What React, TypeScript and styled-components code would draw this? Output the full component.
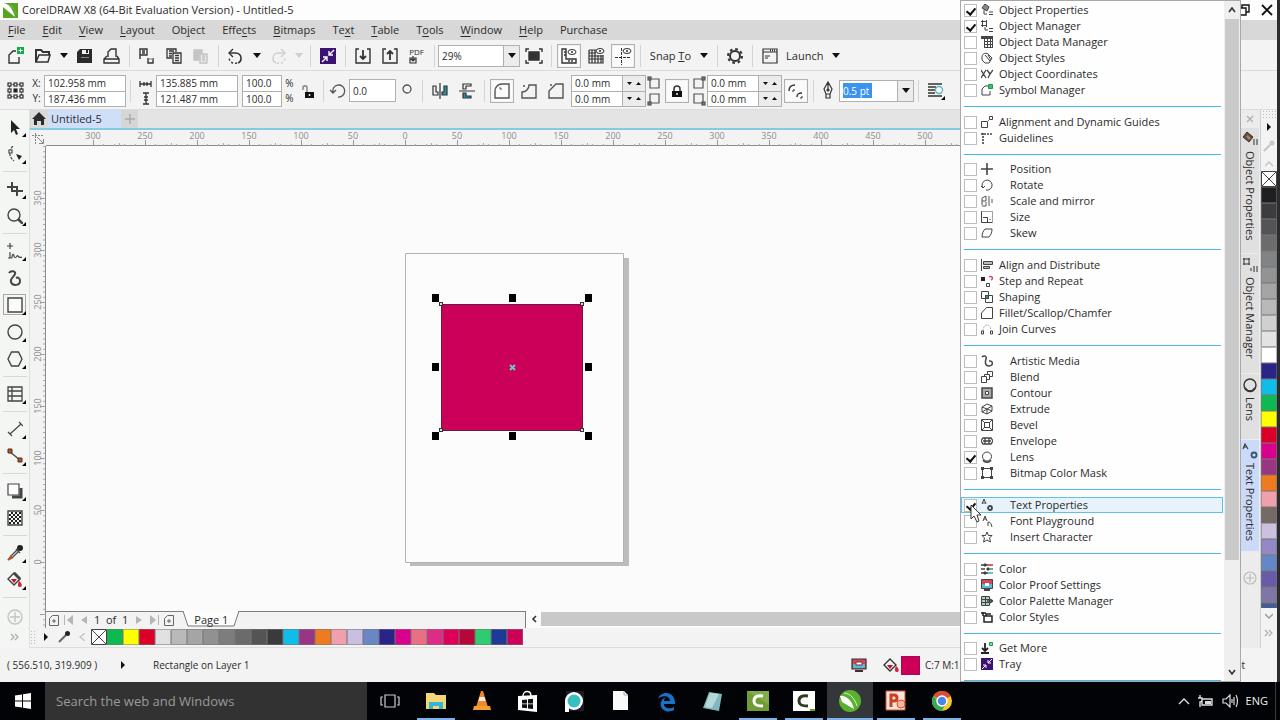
import React from "react";
import styled, { createGlobalStyle, css } from "styled-components";

const GlobalStyle = createGlobalStyle`
  * { box-sizing: border-box; }
  body { margin: 0; background: #000; }
  button, input, select { font: inherit; color: inherit; }
`;

const ink = "#2b2b2b";

/* ---------- icons ---------- */

type IconProps = { w: number; h: number; stroke?: string; sw?: number; children: React.ReactNode };

const Glyph = styled.svg`
  display: block;
  flex: none;
  fill: none;
`;

function Icon({ w, h, stroke = "#333", sw = 1.4, children }: IconProps) {
  return (
    <Glyph width={w} height={h} viewBox={`0 0 ${w} ${h}`} stroke={stroke} strokeWidth={sw} aria-hidden="true">
      {children}
    </Glyph>
  );
}

const Arrow = ({ color = "#111" }: { color?: string }) => (
  <Icon w={8} h={5} stroke="none">
    <path d="M0 0h8L4 5z" fill={color} />
  </Icon>
);

const CorelLogo = () => (
  <Icon w={16} h={16} stroke="none">
    <path d="M0 1h15v15H0z" fill="#57a51f" />
    <path d="M0 1c5 0 10 6 12 14L0 5z" fill="#fff" />
    <path d="M4 2c4 1 8 5 10 11C12 8 9 4 4 2z" fill="#e5f3d8" />
  </Icon>
);

const toolbarIcons: Record<string, React.ReactNode> = {
  new: (
    <Icon w={18} h={18}>
      <path d="M9 4H6L2 8v8h10v-6" />
      <path d="M10 0h7v7h-7z" fill="#17a849" stroke="none" />
      <path d="M13.500 1.500v4M11.500 3.500h4" stroke="#fff" strokeWidth="1" />
    </Icon>
  ),
  open: (
    <Icon w={18} h={18}>
      <path d="M2 15V3h5l2 2h6v3" strokeWidth="2" />
      <path d="M2 15L5 8h11l-2 7z" strokeWidth="1.500" />
    </Icon>
  ),
  save: (
    <Icon w={18} h={18} stroke="none">
      <path d="M1 5l3-3h12v14H1z" fill="#2b2b2b" />
      <path d="M6 3h7v4H6z" fill="#f3f3f3" />
      <path d="M10 3h2v3h-2z" fill="#2b2b2b" />
      <path d="M5 10h8v1H5z" fill="#888" />
    </Icon>
  ),
  print: (
    <Icon w={18} h={18}>
      <path d="M5 10V5l3-3h5v8" />
      <path d="M4 9L1 12v4h15v-4L14 9M1 12h15" />
    </Icon>
  ),
  cut: (
    <Icon w={18} h={18}>
      <path d="M2 12V2h7v6H2M4 4h3M4 6h3" />
      <path d="M10 11v5h5v-5" />
      <path d="M11 12h4" stroke="#999" />
    </Icon>
  ),
  copy: (
    <Icon w={18} h={18} sw={1.3}>
      <path d="M7 11H2V2h9v3M4 4h5M4 6.500h3M4 9h3" />
      <path d="M8 6h8v10H8zM10 8.500h4M10 11h4M10 13.500h4" />
    </Icon>
  ),
  paste: (
    <Icon w={18} h={18} stroke="#c4c4c4">
      <path d="M2 3h8v3H7v7H2z" fill="#c4c4c4" />
      <path d="M8 7h7v9H8zM10 9h3M10 11h3M10 13h3" fill="#e8e8e8" />
    </Icon>
  ),
  undo: (
    <Icon w={18} h={18}>
      <path d="M3 6h6a5 5 0 0 1 5 5 5 5 0 0 1-3 5" strokeWidth="1.600" />
      <path d="M10 16a6 6 0 0 1-8-5" strokeDasharray="2 2" />
      <path d="M6 2L2 6l4 4" />
    </Icon>
  ),
  redo: (
    <Icon w={18} h={18} stroke="#cfcfcf">
      <path d="M15 6H9a5 5 0 0 0-5 5 5 5 0 0 0 3 5" />
      <path d="M8 16a6 6 0 0 0 8-5" strokeDasharray="2 2" />
      <path d="M12 2l4 4-4 4" />
    </Icon>
  ),
  connect: (
    <Icon w={16} h={16} stroke="#fff">
      <path d="M0 0h16v16H0z" fill="#3c1272" stroke="none" />
      <path d="M14 2L9 7M9 3v4h4M2 14l5-5M3 9h4v4" />
    </Icon>
  ),
  import: (
    <Icon w={18} h={18}>
      <path d="M5 2H2v14h14V2h-3" />
      <path d="M9 3v9M6 9l3 3 3-3" strokeWidth="1.800" />
    </Icon>
  ),
  export: (
    <Icon w={18} h={18}>
      <path d="M5 2H2v14h14V2h-3" />
      <path d="M9 13V4M6 7l3-3 3 3" strokeWidth="1.800" />
    </Icon>
  ),
  full: (
    <Icon w={18} h={18}>
      <path d="M4 5h10v8H4z" fill="#333" />
      <path d="M1 5V2h3M14 2h3v3M17 13v3h-3M4 16H1v-3" />
    </Icon>
  ),
  rulers: (
    <Icon w={18} h={18}>
      <path d="M2 2h4v10h10v4H2zM4 5h2M4 8h2M9 13v2M12 13v2" />
      <ellipse cx="12" cy="5" rx="4" ry="2.500" strokeWidth="1" />
      <circle cx="12" cy="5" r="1" fill="#333" stroke="none" />
    </Icon>
  ),
  grid: (
    <Icon w={18} h={18} sw={1.2}>
      <path d="M2 3v13h14V8M5 3v13M8 3v13M11 8v8M14 8v8M2 3h7M2 6h7M2 9h14M2 12h14" />
      <ellipse cx="13" cy="4" rx="4" ry="2.500" strokeWidth="1" />
      <circle cx="13" cy="4" r="1" fill="#333" stroke="none" />
    </Icon>
  ),
  guides: (
    <Icon w={18} h={18} sw={1}>
      <path d="M7.500 1v17M1 10.500h16" strokeDasharray="3 1" />
      <ellipse cx="13" cy="4" rx="4" ry="2.500" />
      <circle cx="13" cy="4" r="1" fill="#333" stroke="none" />
    </Icon>
  ),
  gear: (
    <Icon w={18} h={18}>
      <circle cx="9" cy="9" r="5" strokeWidth="2" />
      <circle cx="9" cy="9" r="7" strokeWidth="2" strokeDasharray="2.700 2.800" />
    </Icon>
  ),
  launch: (
    <Icon w={18} h={18} sw={1.2}>
      <path d="M2 2h14v14H2zM2 5h14M4 9h5M4 11h3" />
      <path d="M9 3.500h6" strokeWidth="2" strokeDasharray="1 1" />
    </Icon>
  ),
};

const PdfIcon = styled.span`
  display: flex;
  flex-direction: column;
  align-items: flex-start;
  font-size: 8px;
  line-height: 9px;
`;

/* ---------- window frame ---------- */

const Desktop = styled.div`
  display: flex;
  flex-direction: column;
  height: 100vh;
  font-family: "Open Sans", "Noto Sans", sans-serif;
  font-size: 11px;
  line-height: 16px;
  color: ${ink};
`;

const AppWindow = styled.main`
  position: relative;
  flex: 1;
  display: flex;
  flex-direction: column;
  min-height: 0;
  background: #f3f3f3;
  border-right: 3px solid #2c2c2f;
  overflow: hidden;
`;

const TitleBar = styled.header`
  display: flex;
  flex: none;
  align-items: center;
  height: 20px;
  padding-left: 3px;
  gap: 3px;
  background: #fdfdfd;
`;

const Title = styled.h1`
  flex: 1;
  margin: 0;
  font: inherit;
`;

const PlainButton = styled.button`
  display: flex;
  align-items: center;
  justify-content: center;
  padding: 0;
  border: 0;
  background: none;
`;

const WindowButton = styled(PlainButton)`
  width: 20px;
  height: 18px;
`;

const MenuBar = styled.nav`
  display: flex;
  flex: none;
  height: 20px;
  background: #d8d8d8;
`;

const MenuButton = styled(PlainButton)`
  padding: 0 9px 0 8px;
  u { text-underline-offset: 2px; }
`;

const Toolbar = styled.div`
  display: flex;
  flex: none;
  align-items: center;
  height: 30px;
  padding: 1px 0 0 2px;
`;

const PropertyBar = styled(Toolbar)`
  height: 40px;
  border-top: 1px solid #dcdcdc;
  border-bottom: 1px solid #dcdcdc;
  font-size: 10px;
`;

const Divider = styled.span`
  flex: none;
  width: 8px;
  height: 22px;
  background: linear-gradient(#d4d4d4, #d4d4d4) center / 1px 100% no-repeat;
`;

const ToolButton = styled(PlainButton)<{ $framed?: boolean; $narrow?: boolean }>`
  flex: none;
  width: ${(p) => (p.$narrow ? 22 : 27)}px;
  height: 27px;
  svg { overflow: visible; }
  ${(p) =>
    p.$framed &&
    css`
      background: linear-gradient(#fbfbfb, #fbfbfb) center / 20px 20px no-repeat;
      &::before {
        content: "";
        position: absolute;
        width: 22px;
        height: 22px;
        border: 1px solid #b0b0b0;
      }
    `}
`;

const DropButton = styled(PlainButton)<{ $wide?: boolean }>`
  flex: none;
  width: ${(p) => (p.$wide ? 18 : 15)}px;
  height: 22px;
`;

const TextButton = styled(PlainButton)`
  padding: 0 4px 0 3px;
`;

const Combo = styled.div<{ $w: number }>`
  display: flex;
  align-items: center;
  flex: none;
  width: ${(p) => p.$w}px;
  height: 22px;
  border: 1px solid #b0b0b0;
  background: #fff;
  font-size: 10px;
`;

const ComboSelect = styled.select`
  flex: 1;
  min-width: 0;
  height: 20px;
  padding: 0 3px;
  border: 0;
  background: none;
  appearance: none;
`;

const ComboArrow = styled.span`
  display: flex;
  align-items: center;
  justify-content: center;
  width: 16px;
  height: 20px;
  border-left: 1px solid #b0b0b0;
  background: #ececec;
`;

const ComboBody = styled.span`
  flex: 1;
  padding-left: 3px;
`;

const SelectedInput = styled.input`
  display: block;
  width: 29px;
  height: 15px;
  padding: 0;
  border: 0;
  background: #3a93ee;
  color: #fff;
`;

const FieldPair = styled.div<{ $w: number }>`
  flex: none;
  width: ${(p) => p.$w}px;
  border: 1px solid #b0b0b0;
  background: #fff;
`;

const FieldRow = styled.div`
  display: flex;
  height: 15px;
  & + & { border-top: 1px solid #b0b0b0; }
`;

const Field = styled.input`
  flex: 1;
  min-width: 0;
  width: 100%;
  padding: 0 3px;
  border: 0;
  background: none;
  line-height: 14px;
`;

const Spinner = styled.span`
  display: flex;
  align-items: center;
  justify-content: space-evenly;
  width: 23px;
  border-left: 1px solid #b0b0b0;
  background: #ececec;
`;

const SideLabels = styled.div<{ $w: number }>`
  display: flex;
  flex: none;
  flex-direction: column;
  align-items: center;
  width: ${(p) => p.$w}px;
  line-height: 15px;
  label, span, svg { height: 15px; }
`;

const AngleField = styled(Field)`
  flex: none;
  width: 47px;
  height: 23px;
  border: 1px solid #b0b0b0;
  background: #fff;
`;

/* ---------- workspace ---------- */

const Workspace = styled.div`
  flex: 1;
  display: flex;
  min-height: 0;
`;

const Toolbox = styled.aside`
  display: flex;
  flex: none;
  flex-direction: column;
  align-items: center;
  width: 30px;
  padding-top: 3px;
  border-right: 1px solid #dedede;
  background: #f4f6f4;
`;

const ToolSlot = styled(PlainButton)<{ $active?: boolean }>`
  position: relative;
  flex: none;
  width: 27px;
  height: 27px;
  ${(p) =>
    p.$active &&
    css`
      &::before {
        content: "";
        position: absolute;
        inset: 3px 2px;
        border: 1px solid #a8a8a8;
      }
    `}
`;

const Flyout = styled.span`
  position: absolute;
  right: 2px;
  bottom: 3px;
  border: 2px solid #000;
  border-top-color: transparent;
  border-left-color: transparent;
`;

const ToolRule = styled.span`
  flex: none;
  width: 24px;
  height: 8px;
  background: linear-gradient(#d8d8d8, #d8d8d8) center / 100% 1px no-repeat;
`;

const Center = styled.section`
  flex: 1;
  display: flex;
  flex-direction: column;
  min-width: 0;
`;

const TabStrip = styled.div`
  display: flex;
  flex: none;
  height: 20px;
  background: #e4e4e4;
  border-bottom: 2px solid #86c9e3;
`;

const HomeTab = styled(PlainButton)`
  width: 18px;
  background: #dadada;
`;

const DocTab = styled(PlainButton)`
  justify-content: flex-start;
  width: 73px;
  padding-left: 3px;
  background: #cfdffa;
`;

const AddTab = styled(PlainButton)`
  width: 17px;
  background: #d6d6d6;
`;

const DrawArea = styled.div`
  flex: 1;
  display: grid;
  grid-template: 16px minmax(0, 1fr) 17px / 16px minmax(0, 1fr);
  min-height: 0;
`;

const RulerCorner = styled.div`
  background: #f3f3f3;
  padding: 2px;
`;

const RulerX = styled.svg`
  width: 100%;
  height: 16px;
  background: #f3f3f3;
  font-size: 9px;
`;

const RulerY = styled.div`
  grid-row: 2 / 4;
  min-height: 0;
  overflow: hidden;
  font-size: 9px;
`;

const Canvas = styled.div`
  min-width: 0;
  min-height: 0;
  overflow: hidden;
  background: #fbfbfb;
`;

const PageNav = styled.div`
  display: flex;
  min-width: 0;
`;

const PageControls = styled.div`
  display: flex;
  align-items: center;
  flex: none;
  width: 480px;
  border-top: 1px solid #7e7e7e;
  border-right: 1px solid #7e7e7e;
`;

const NavButton = styled(PlainButton)`
  width: 15px;
  height: 16px;
`;

const PageCount = styled.span`
  padding: 0 3px;
`;

const PageTab = styled(PlainButton)`
  position: relative;
  width: 56px;
  height: 16px;
  margin-left: 7px;
  svg { position: absolute; left: 0; top: -1px; }
  span { position: relative; }
`;

const HScroll = styled.div`
  flex: 1;
  display: flex;
  background: #fbfbfb;
`;

const ScrollThumb = styled.span`
  flex: 1;
  margin: 1px 17px 2px 0;
  background: #c9c9c9;
`;

const DocPalette = styled.div`
  display: flex;
  flex: none;
  align-items: center;
  height: 20px;
  padding-bottom: 1px;
  border-bottom: 1px solid #dcdcdc;
`;

const PaletteButton = styled(PlainButton)`
  width: 18px;
  height: 16px;
`;

const Grip = styled.span`
  width: 7px;
  height: 14px;
  background: radial-gradient(#bbb 1px, transparent 1px) 0 0 / 3px 3px;
`;

const BarGrip = styled(Grip)`
  flex: none;
  width: 14px;
  height: 8px;
`;

const Swatches = styled.div<{ $vertical?: boolean }>`
  display: flex;
  flex: none;
  flex-direction: ${(p) => (p.$vertical ? "column" : "row")};
`;

const Swatch = styled.button<{ $c: string }>`
  display: block;
  flex: none;
  width: 16px;
  height: 16px;
  padding: 0;
  border: 1px solid #77777788;
  background: ${(p) => p.$c};
`;

/* ---------- dockers ---------- */

const Dockers = styled.aside`
  display: flex;
  flex: none;
  flex-direction: column;
  align-items: center;
  width: 21px;
  border-right: 1px solid #d0d0d0;
  background: #ececec;
`;

const DockTab = styled(PlainButton)<{ $h: number; $active?: boolean }>`
  flex: none;
  flex-direction: column;
  justify-content: flex-start;
  gap: 4px;
  width: 18px;
  height: ${(p) => p.$h}px;
  padding-top: 3px;
  background: ${(p) => (p.$active ? "#cbdaf8" : "#e0e0e0")};
  border-bottom: 1px solid #ececec;
  span { writing-mode: vertical-rl; }
`;

const DockButton = styled(PlainButton)<{ $h: number }>`
  flex: none;
  width: 100%;
  height: ${(p) => p.$h}px;
`;

const ColorBar = styled.aside`
  display: flex;
  flex: none;
  flex-direction: column;
  align-items: center;
  width: 16px;
`;

const CutSwatches = styled(Swatches)`
  overflow: hidden;
  height: 437px;
`;

/* ---------- status bar ---------- */

const StatusBar = styled.footer`
  display: flex;
  flex: none;
  align-items: center;
  height: 34px;
  padding-left: 7px;
  font-size: 10px;
  white-space: nowrap;
`;

const StatusCoords = styled.span`
  width: 114px;
`;

const StatusCell = styled.span`
  width: 32px;
`;

const StatusObject = styled.span`
  flex: 1;
`;

const StatusFill = styled.span`
  width: 35px;
  margin-right: 257px;
  overflow: hidden;
`;

const StatusOutline = styled.span`
  width: 60px;
  text-align: right;
  padding-right: 32px;
`;

const StatusSwatch = styled.span`
  width: 19px;
  height: 19px;
  margin-right: 5px;
  background: #cc0058;
  border: 1px solid #a50a4c;
`;

/* ---------- dockers pop-up menu ---------- */

const Popup = styled.div`
  position: absolute;
  top: 0;
  bottom: 0;
  right: 36px;
  display: flex;
  width: 281px;
  border: 1px solid #a8a8a8;
  background: #fefefe;
  overflow: hidden;
`;

const PopupList = styled.form`
  flex: 1;
  padding-top: 1px;
`;

const PopupGroup = styled.fieldset<{ $tight?: boolean }>`
  margin: 0 0 ${(p) => (p.$tight ? 6 : 7)}px;
  padding: 0;
  border: 0;
  &::after {
    content: "";
    display: block;
    height: 1px;
    margin: 8px 3px 0;
    background: #45b9e0;
  }
`;

const PopupItem = styled.label<{ $hot?: boolean; $inset?: boolean }>`
  display: flex;
  align-items: center;
  height: 16px;
  padding-left: ${(p) => (p.$hot ? 2 : 3)}px;
  ${(p) =>
    p.$hot &&
    css`
      margin-right: 1px;
      border: 1px solid #62c0e2;
      background: #e6f3fb;
    `}
  span { padding-left: ${(p) => (p.$inset ? 17 : 6)}px; }
`;

const CheckBox = styled.input`
  flex: none;
  width: 13px;
  height: 13px;
  margin: 0 4px 0 0;
  border: 1px solid #bdbdbd;
  background: #fff;
  appearance: none;
  &:checked::after {
    content: "";
    display: block;
    width: 4px;
    height: 7px;
    margin: 1px 0 0 3px;
    border: solid #111;
    border-width: 0 2px 2px 0;
    transform: rotate(40deg);
  }
`;

const PopupScroll = styled.div`
  display: flex;
  flex-direction: column;
  justify-content: space-between;
  width: 16px;
  padding: 0 1px;
  background: #efefef;
`;

const ScrollTrack = styled.span`
  flex: 1;
  &::before {
    content: "";
    display: block;
    height: 84%;
    background: #cacaca;
  }
`;

const ScrollArrow = styled.span`
  display: flex;
  align-items: center;
  justify-content: center;
  height: 18px;
`;

const Cursor = styled.div`
  position: absolute;
  top: 504px;
  right: 294px;
`;

/* ---------- taskbar ---------- */

const Taskbar = styled.footer`
  display: flex;
  flex: none;
  height: 38px;
  background: #020306;
  color: #eee;
`;

const StartButton = styled(PlainButton)`
  width: 45px;
`;

const Search = styled.input`
  width: 322px;
  padding: 0 11px;
  border: 0;
  background: #323232;
  font-size: 13px;
  &::placeholder { color: #9a9a9a; opacity: 1; }
`;

const TaskItem = styled(PlainButton)<{ $open?: boolean; $active?: boolean }>`
  width: 46px;
  background: ${(p) => (p.$active ? "#34373a" : "none")};
  ${(p) =>
    p.$open &&
    css`
      background-image: linear-gradient(#7fb2e6, #7fb2e6);
      background-size: ${p.$active ? "100%" : "38px"} 2px;
      background-position: center bottom;
      background-repeat: no-repeat;
    `}
`;

const Tray = styled.div`
  display: flex;
  align-items: center;
  gap: 8px;
  margin-left: auto;
  padding-right: 7px;
  border-right: 1px solid #3a3a3a;
  margin-right: 4px;
`;

/* ---------- data ---------- */

const menus: [string, number][] = [
  ["File", 0], ["Edit", 0], ["View", 0], ["Layout", 0], ["Object", 2], ["Effects", 4], ["Bitmaps", 0],
  ["Text", 2], ["Table", 0], ["Tools", 1], ["Window", 0], ["Help", 0], ["Purchase", -1],
];

const docColors = [
  "#0dba52", "#ffff00", "#dc0028", "#e1e1e1", "#b9b9b9", "#a5a5a5", "#919191", "#7d7d7d", "#6b6b6b", "#545454",
  "#3a3a3e", "#10bde8", "#993683", "#ef7b20", "#f0a0ac", "#c9bfe0", "#6987c5", "#2a2489", "#d9008c", "#e87084",
  "#de2b86", "#dd0057", "#b50838", "#2ecc71", "#1e3a96", "#cc0058",
];

const barColors = [
  "#1f1f22", "#3c3c3f", "#545456", "#6b6c6b", "#818385", "#939393", "#a5a5a5", "#b9b9b9", "#d0d0d0", "#e3e3e3",
  "#ffffff", "#2a2489", "#10bde8", "#0dba52", "#ffff00", "#dc0028", "#d9008c", "#993683", "#ef7b20", "#f0a0ac",
  "#756a66", "#cbc0e0", "#9489c4", "#6687c6", "#6b5aa8", "#8076a6", "#425b93",
];

const tools: ({ name: string; flyout?: boolean; active?: boolean; art: React.ReactNode } | null)[] = [
  { name: "Pick", flyout: true, art: <path d="M4 1v13l3-3 2 5 2-1-2-5h4z" fill="#222" stroke="none" /> },
  {
    name: "Shape", flyout: true,
    art: (<><path d="M6 0C2 4 1 10 7 15" strokeDasharray="3 1" strokeWidth="1.200" /><path d="M2 4h3v3H2z" fill="#fff" strokeWidth="1.200" /><path d="M9 8l6 2-3 4z" fill="#222" stroke="none" /></>),
  },
  null,
  { name: "Crop", flyout: true, art: <path d="M0 6h10v9M5 1v9h11" strokeWidth="2" /> },
  { name: "Zoom", flyout: true, art: (<><circle cx="7" cy="7" r="6" /><path d="M11 11l5 5" strokeWidth="2.500" /></>) },
  null,
  { name: "Freehand", flyout: true, art: <path d="M3 0v6M0 3h6M3 9v6M1 15h4M5 15c0-5 2-4 2-2s2 2 3 0 1 3 5 1" strokeWidth="1.200" /> },
  { name: "Artistic Media", art: <path d="M2 3c2-3 7-2 6 1S3 8 4 12s9 4 9-1c0-3-2-4-4-3" strokeWidth="2" /> },
  { name: "Rectangle", flyout: true, active: true, art: <path d="M1 1h14v14H1z" fill="#fbfbf8" /> },
  { name: "Ellipse", flyout: true, art: <circle cx="8" cy="8" r="7" /> },
  { name: "Polygon", flyout: true, art: <path d="M4.500 1h7L15 8l-3.500 7h-7L1 8z" /> },
  null,
  { name: "Table", flyout: true, art: <path d="M1 1h14v14H1zM5 1v14M1 5h14M1 10h14M5 5v10" strokeWidth="1.300" /> },
  null,
  { name: "Dimension", flyout: true, art: <path d="M3 13L14 3M1 11l4 4M12 1l4 4" strokeWidth="1.200" /> },
  {
    name: "Connector", flyout: true,
    art: (<><path d="M3 4l10 8" /><path d="M1 1h4v4H1zM11 10h4v4h-4z" fill="#a5562c" stroke="#5a331d" strokeWidth="1" /></>),
  },
  null,
  { name: "Drop Shadow", flyout: true, art: (<><path d="M5 14h9V5" strokeWidth="3" /><path d="M1 1h11v11H1z" fill="#fff" strokeWidth="1.200" /></>) },
  {
    name: "Transparency",
    art: (
      <>
        <path d="M1 1h14v14H1z" />
        {Array.from({ length: 36 }, (_, i) =>
          (i + Math.floor(i / 6)) % 2 ? (
            <rect key={i} x={2 + (i % 6) * 2} y={2 + Math.floor(i / 6) * 2} width="2" height="2" fill="#222" stroke="none" />
          ) : null
        )}
      </>
    ),
  },
  null,
  {
    name: "Color Eyedropper", flyout: true,
    art: (<><path d="M10 5L4 11l-2 3 3-1 6-6" strokeWidth="1.200" /><path d="M1 15l3-4 1 2z" fill="#b5542c" stroke="#b5542c" /><circle cx="13" cy="3" r="3" fill="#222" stroke="none" /><path d="M9 4l4 4" strokeWidth="1.500" /></>),
  },
  {
    name: "Interactive Fill", flyout: true,
    art: (<><path d="M7 1l6 6-6 6-6-6z" strokeWidth="1.500" /><path d="M7 1l6 6" strokeWidth="3" /><path d="M4 7h6l-3 4z" fill="#c8102e" stroke="none" /><path d="M12 9c4 3 3 6 1 6s-3-2-1-6z" fill="#d8213f" stroke="none" /></>),
  },
  null,
];

const a = "#444";
const teal = "#2595b0";

type Item = { label: string; inset?: boolean; checked?: boolean; hot?: boolean; art: React.ReactNode };

const popupGroups: { tight?: boolean; items: Item[] }[] = [
  {
    items: [
      { label: "Object Properties", checked: true, art: (<><path d="M4 0l4 3-2 4-5-3z" fill="#888" /><path d="M3 6v4h3M8 8h4M8 10.500h4" /></>) },
      { label: "Object Manager", checked: true, art: <path d="M0 1.500h6M0 5.500h6M1.500 0v7M5.500 0v7M4 7v3h3M8 8.500h4M8 11.500h4" /> },
      { label: "Object Data Manager", art: (<><path d="M0 1.500h12" strokeWidth="3" /><path d="M3 5.500h9M3 8.500h9M3 11.500h9M3.500 3v9M6.500 3v9M9.500 3v9M11.500 3v9" /></>) },
      { label: "Object Styles", art: (<><path d="M1 5c0-4 5-5 7-2l3 3-3 5H4L1 8z" /><path d="M4 3l5 6M7 3l3 5" /></>) },
      { label: "Object Coordinates", art: <path d="M0 2l5 8M5 2L0 10M6 2l3 4M12 2L9 6l-2 4" strokeWidth="1.300" /> },
      { label: "Symbol Manager", art: (<><path d="M7 2H4L1 5v6h8V7" /><path d="M7.500 .5h4v4h-4z" fill="#39c06a" stroke="#1a9c49" /></>) },
    ],
  },
  {
    tight: true,
    items: [
      { label: "Alignment and Dynamic Guides", art: (<><path d="M.5 5.500h6v6h-6z" /><path d="M8.500 .5h3v3h-3z" /><path d="M6 6l2-2" stroke={teal} /></>) },
      { label: "Guidelines", art: <path d="M2 12V1M0 2h12" strokeDasharray="2 1" strokeWidth="1.600" /> },
    ],
  },
  {
    items: [
      { label: "Position", inset: true, art: <path d="M6 0v12M0 6h12" strokeWidth="1.600" /> },
      { label: "Rotate", inset: true, art: <path d="M2 9A5 5 0 1 1 5 11M0 7l2 2 2-2" /> },
      { label: "Scale and mirror", inset: true, art: <path d="M1 10V3l4-2v5H1M5 7v4H1M8 1v10M11 4v4" strokeWidth="0.900" /> },
      { label: "Size", inset: true, art: (<><path d="M.5 .5h11v11" strokeDasharray="1 1" /><path d="M.5 .5v11h11M2 6.500h4.500v5M9 8v1" /></>) },
      { label: "Skew", inset: true, art: <path d="M4 2h7c0 3-1 6-3 8H1c0-3 1-6 3-8z" /> },
    ],
  },
  {
    items: [
      { label: "Align and Distribute", art: <path d="M.5 0v12M2.500 2.500h9v3h-9zM2.500 7.500h6v2h-6z" fill="#bbb" /> },
      { label: "Step and Repeat", art: (<><path d="M0 2h4v4H0z" fill="#222" stroke="none" /><path d="M5.500 8.500h3v3h-3z" /><path d="M8 2c3-2 5 2 2 3" stroke="#d8476a" strokeWidth="1.500" /></>) },
      { label: "Shaping", art: (<><path d="M.5 .5h7v7h-7z" /><path d="M4.500 4.500h7v7h-7z" /><path d="M4.500 4.500h3v3h-3z" fill={teal} /></>) },
      { label: "Fillet/Scallop/Chamfer", art: <path d="M.5 11.500V6l5-5.500h6v11z" /> },
      { label: "Join Curves", art: (<><path d="M2 8c0-8 8-8 8 0" stroke="#aaa" strokeDasharray="2 1" /><path d="M.5 8h2v3h-2zM9.500 8h2v3h-2z" /></>) },
    ],
  },
  {
    items: [
      { label: "Artistic Media", inset: true, art: <path d="M1 2c2-2 5-1 4 2s-1 7 3 7c5 0 4-6 0-5" strokeWidth="1.500" /> },
      { label: "Blend", inset: true, art: <path d="M.5 5.500h5v6h-5zM3.500 5V3.500h5v5H6M6.500 3V.5h5v5H9" /> },
      { label: "Contour", inset: true, art: (<><path d="M1 1h10v10H1z" fill="#aaa" strokeWidth="1.500" /><path d="M4.500 4.500h3v3h-3z" fill="#fff" /></>) },
      { label: "Extrude", inset: true, art: <path d="M6 1l5 2v5l-5 3-5-2V4zM1 4l5 2 5-3M6 6v5M1 9l5-3 5 2" /> },
      { label: "Bevel", inset: true, art: <path d="M.5 .5h11v11H.5zM3.500 3.500h5v5h-5zM1 1l3 3M11 1L8 4M1 11l3-3M11 11L8 8" /> },
      { label: "Envelope", inset: true, art: <path d="M2 3h8l2 3-2 3H2L0 6zM4 3v6M8 3v6M2 6h8" strokeWidth="1.300" /> },
      { label: "Lens", inset: true, checked: true, art: (<><circle cx="6" cy="5.500" r="4.500" /><path d="M2 9c2 3 6 3 8 0" strokeWidth="1.600" /></>) },
      { label: "Bitmap Color Mask", inset: true, art: (<><path d="M1.500 1.500h9v9h-9z" /><path d="M0 0h3v3H0zM9 0h3v3H9zM0 9h3v3H0zM9 9h3v3H9z" fill="#444" stroke="none" /></>) },
    ],
  },
  {
    items: [
      { label: "Text Properties", inset: true, checked: true, hot: true, art: (<><path d="M1 5l2-5 2 5M2 4h2" /><circle cx="9" cy="9" r="2" strokeWidth="1.800" /></>) },
      { label: "Font Playground", inset: true, art: <path d="M2 6l2-5 2 5M3 4h2M7 11V7c3 0 3 2 4 5" /> },
      { label: "Insert Character", inset: true, art: <path d="M6 1l1.500 3.500H11L8.500 7l1 4L6 9l-3.500 2 1-4L1 4.500h3.500z" /> },
    ],
  },
  {
    tight: true,
    items: [
      { label: "Color", art: (<><path d="M0 2h7M0 6h4M0 10h7" strokeWidth="1.500" /><path d="M3 1h2v2H3zM6 5h2v2H6zM3 9h2v2H3z" fill="#333" /><path d="M7 2h5" stroke="#d23" strokeWidth="1.500" /><path d="M8 6h4" stroke="#2a9c55" strokeWidth="1.500" /><path d="M7 10h5" stroke="#39a9d8" strokeWidth="1.500" /></>) },
      { label: "Color Proof Settings", art: (<><path d="M.5 .5h11v9H.5z" fill="#d2485a" /><path d="M1 5h10v4H1z" fill="#58b9da" stroke="none" /><path d="M4 4h4v3H4z" fill="#fff" stroke="none" /><path d="M3 11h6" strokeWidth="2" /></>) },
      { label: "Color Palette Manager", art: (<><path d="M.5 1.500h8v9h-8zM1 4.500h8M1 7.500h8M4.500 1v10" fill="#a9d0c8" /><path d="M6 6h6M9 4l3 2-3 2" strokeWidth="1.400" /></>) },
      { label: "Color Styles", art: <path d="M0 2h5M2 1v4M3 11V5h8v6zM5 5V3h5" strokeWidth="1.500" stroke="#222" /> },
    ],
  },
  {
    items: [
      { label: "Get More", art: (<><path d="M4 1v7M1 6l3 3 3-3M0 11h8" strokeWidth="1.800" stroke="#222" /><path d="M8.500 .5h3v3h-3z" fill="#7fdca0" stroke="#1a9c49" /></>) },
      { label: "Tray", art: (<><path d="M0 0h12v12H0z" fill="#3c1272" stroke="none" /><path d="M11 1L7 5M7 2v3h3M1 11l4-4M2 7h3v3" stroke="#fff" /></>) },
    ],
  },
];

/* ---------- parts ---------- */

const Tool = ({ id, label, framed }: { id: string; label: string; framed?: boolean }) => (
  <ToolButton $framed={framed} aria-label={label}>{toolbarIcons[id]}</ToolButton>
);

const Drop = ({ label, color, wide }: { label: string; color?: string; wide?: boolean }) => (
  <DropButton aria-label={label} $wide={wide}><Arrow color={color} /></DropButton>
);

const Spin = () => (
  <Spinner>
    <Icon w={5} h={3} stroke="none"><path d="M0 0h5L2.500 3z" fill="#111" /></Icon>
    <Icon w={5} h={3} stroke="none"><path d="M0 3h5L2.500 0z" fill="#111" /></Icon>
  </Spinner>
);

const corner = (x: number, y: number) => (
  <Icon w={15} h={15} stroke="#555" sw={1.2}>
    <path d="M3 3h9v9H3z" />
    <rect x={x} y={y} width="3" height="3" fill="#777" />
  </Icon>
);

const Padlock = ({ open }: { open?: boolean }) => (
  <Icon w={14} h={16}>
    <path d={open ? "M2 7V5c0-3 4-3 4 0v4" : "M4 8V6c0-4 6-4 6 0v2"} stroke={open ? "#888" : "#333"} strokeWidth="1.500" />
    <path d={open ? "M4 9h9v6H4z" : "M2 8h10v6H2z"} fill="#111" stroke="none" />
    <path d={open ? "M8.500 11v2" : "M7 10v2"} stroke="#fff" />
  </Icon>
);

const LensArt = () => (
  <Icon w={16} h={16} stroke="#333"><circle cx="8" cy="8" r="6" /><path d="M3 11c3 5 8 4 10 0" strokeWidth="1.800" /></Icon>
);

const CrossSwatch = () => (
  <Icon w={16} h={16} stroke="#444" sw={1}><path d="M0.500 0.500h15v15h-15zM1 1l14 14M15 1L1 15" fill="#fff" /></Icon>
);

const ORIGIN_X = 359;
const STEP = 52;
const LAST_LABEL = 10;

function HorizontalRuler() {
  const marks = Array.from({ length: 40 }, (_, i) => i - 6);
  return (
    <RulerX aria-label="Horizontal ruler">
      <path d="M0 15.500h3000" stroke="#8a8a8a" />
      {marks.map((m) => (
        <g key={m}>
          {m <= LAST_LABEL && (
            <text x={ORIGIN_X + m * STEP} y="9" textAnchor="middle" fill="#8c8c8c">{Math.abs(m * 50)}</text>
          )}
          <path d={`M${ORIGIN_X + m * STEP}.5 10v6`} stroke="#999" />
          {[10, 21, 31, 42].map((d) => (
            <path key={d} d={`M${ORIGIN_X + m * STEP + d}.5 14v2`} stroke="#aaa" />
          ))}
          <path d={`M${ORIGIN_X + m * STEP + 26}.5 13v3`} stroke="#aaa" />
        </g>
      ))}
    </RulerX>
  );
}

function VerticalRuler() {
  const marks = Array.from({ length: 8 }, (_, i) => i);
  return (
    <svg width="16" height="1000" aria-label="Vertical ruler">
      <path d="M15.500 0v1000" stroke="#8a8a8a" />
      {marks.map((m) => {
        const y = 416 - m * STEP;
        return (
          <g key={m}>
            <text x="0" y="0" transform={`translate(11 ${y}) rotate(-90)`} textAnchor="middle" fill="#8c8c8c">{m * 50}</text>
            <path d={`M10 ${y}.5h6`} stroke="#999" />
          </g>
        );
      })}
      <path d="M10 468.500h6" stroke="#999" />
      <path d="M14 0v481" stroke="#aaa" strokeWidth="2" strokeDasharray="1 4.200" />
    </svg>
  );
}

function Artwork() {
  const handles: [number, number][] = [
    [389, 152], [466, 152], [542, 152], [389, 221], [542, 221], [389, 290], [466, 290], [542, 290],
  ];
  return (
    <svg width="1200" height="465" role="img" aria-label="Drawing page">
      <path d="M364 112h219v308H364z" fill="#bcbcbc" />
      <path d="M359.500 107.500h218v309h-218z" fill="#fcfcfc" stroke="#b4b4b4" />
      <path d="M395.500 158.500h141v126h-141z" fill="#cb0058" stroke="#6a1a3c" />
      {handles.map(([x, y]) => (
        <rect key={`${x}-${y}`} x={x - 3} y={y - 4} width="7" height="8" fill="#000" />
      ))}
      {[[394, 157], [535, 157], [394, 283], [535, 283]].map(([x, y]) => (
        <rect key={`${x}-${y}`} x={x - 0.5} y={y - 0.5} width="3" height="3" fill="#ddd" stroke="#333" />
      ))}
      <path d="M464 219l5 5M469 219l-5 5" stroke="#6fc3d6" strokeWidth="2" />
    </svg>
  );
}

function DocumentPalette() {
  return (
    <DocPalette>
      <Grip />
      <PaletteButton aria-label="Palette menu"><Icon w={4} h={8} stroke="none"><path d="M0 0v8l4-4z" fill="#111" /></Icon></PaletteButton>
      <PaletteButton aria-label="Palette eyedropper">
        <Icon w={14} h={14}><path d="M2 12l7-7" strokeWidth="2" stroke="#666" /><circle cx="10.500" cy="3.500" r="2.500" fill="#222" stroke="none" /></Icon>
      </PaletteButton>
      <PaletteButton aria-label="Scroll palette left"><Icon w={7} h={8} stroke="#c4c4c4"><path d="M6 0L1 4l5 4" /></Icon></PaletteButton>
      <Swatches>
        <CrossSwatch />
        {docColors.map((c) => <Swatch key={c} $c={c} aria-label={`Color ${c}`} />)}
      </Swatches>
    </DocPalette>
  );
}

const navArt: Record<string, React.ReactNode> = {
  add: <Icon w={10} h={12} stroke="#666" sw={1}><path d="M3.500 1.500h6v10h-9v-7zM5 5v4M3 7h4" /></Icon>,
  first: <Icon w={10} h={10} stroke="none"><path d="M0 0h1v10H0zM9 0v10L3 5z" fill="#b5b5b5" /></Icon>,
  prev: <Icon w={8} h={10} stroke="none"><path d="M7 1v8L1 5z" fill="#b5b5b5" /></Icon>,
  next: <Icon w={8} h={10} stroke="none"><path d="M1 1v8l6-4z" fill="#b5b5b5" /></Icon>,
  last: <Icon w={10} h={10} stroke="none"><path d="M9 0h1v10H9zM1 0v10l6-5z" fill="#b5b5b5" /></Icon>,
};

function PageNavigator() {
  return (
    <PageNav>
      <PageControls>
        <NavButton aria-label="Add page before">{navArt.add}</NavButton>
        <NavButton aria-label="First page">{navArt.first}</NavButton>
        <NavButton aria-label="Previous page">{navArt.prev}</NavButton>
        <PageCount>1&nbsp; of &nbsp;1</PageCount>
        <NavButton aria-label="Next page">{navArt.next}</NavButton>
        <NavButton aria-label="Last page">{navArt.last}</NavButton>
        <NavButton aria-label="Add page after">{navArt.add}</NavButton>
        <PageTab>
          <Icon w={56} h={16} stroke="#777" sw={1}><path d="M0 0l5 15h46l5-15" fill="#fdfdfd" /></Icon>
          <span>Page 1</span>
        </PageTab>
      </PageControls>
      <HScroll>
        <NavButton aria-label="Scroll left"><Icon w={6} h={8} stroke="#333" sw={1.6}><path d="M5 1L2 4l3 3" /></Icon></NavButton>
        <ScrollThumb />
      </HScroll>
    </PageNav>
  );
}

function DockersMenu() {
  return (
    <Popup>
      <PopupList aria-label="Dockers">
        {popupGroups.map((g, i) => (
          <PopupGroup key={i} $tight={g.tight}>
            {g.items.map((it) => (
              <PopupItem key={it.label} $inset={it.inset} $hot={it.hot}>
                <CheckBox type="checkbox" defaultChecked={it.checked} />
                <Icon w={12} h={12} stroke={a} sw={1}>{it.art}</Icon>
                <span>{it.label}</span>
              </PopupItem>
            ))}
          </PopupGroup>
        ))}
      </PopupList>
      <PopupScroll aria-hidden="true">
        <ScrollArrow><Icon w={8} h={6} sw={1.6}><path d="M1 5l3-4 3 4" /></Icon></ScrollArrow>
        <ScrollTrack />
        <ScrollArrow><Icon w={8} h={6} sw={1.6}><path d="M1 1l3 4 3-4" /></Icon></ScrollArrow>
      </PopupScroll>
    </Popup>
  );
}

const taskItems: { name: string; open?: boolean; active?: boolean; art: React.ReactNode }[] = [
  { name: "Task View", art: <path d="M6 5h10v12H6zM4 7H2v8h2M18 7h2v8h-2" stroke="#ccc" strokeWidth="1.200" /> },
  { name: "File Explorer", open: true, art: (<><path d="M1 3h8l2 2h10v14H1z" fill="#f3d677" stroke="none" /><path d="M4 19v-7h14v7h-4v-3H8v3z" fill="#35b5d0" stroke="none" /></>) },
  { name: "VLC", art: (<><path d="M10 1h2l5 16H5z" fill="#f08a24" stroke="none" /><path d="M8.500 7h5l1 4h-7z" fill="#eee" stroke="none" /><path d="M3 16h16l1 4H2z" fill="#f3a133" stroke="none" /></>) },
  { name: "Store", art: (<><path d="M1 6l19-1v17L1 20z" fill="#fff" stroke="none" /><path d="M6 6c0-6 8-6 8 0" stroke="#fff" /><path d="M5 10l5-.5v4H5zM11 9.300l5-.5v4.700h-5zM5 14.300h5v4L5 17.800zM11 14.300h5v4.700l-5-.6z" fill="#111" stroke="none" /></>) },
  { name: "PicsArt", art: (<><path d="M3 1h18v20H3z" fill="#1a1c22" stroke="none" /><circle cx="11" cy="11" r="9" fill="#fff" stroke="none" /><path d="M2 11h4v11H2z" fill="#fff" stroke="none" /><circle cx="11" cy="11" r="6.500" fill="#37bfc0" stroke="none" /></>) },
  { name: "Document", art: (<><path d="M4 1h11l4 4v15H4z" fill="#fafafa" stroke="none" /><path d="M15 1v4h4" stroke="#aaa" strokeWidth="1" /></>) },
  { name: "Edge", art: <path d="M3 9c2-8 16-9 17 3v2H9c0 5 7 5 10 3v3C12 24 4 19 6 12c1-3 3-4 5-5-1 1-2 2-2 4h6c0-6-9-6-12-2z" fill="#1673c8" stroke="none" /> },
  { name: "Notepad", art: (<><path d="M8 2l13 2-3 17-16-3z" fill="#7fb9bd" stroke="none" /><path d="M9 3l9 1-7 14-7-1z" fill="#b5d9d8" stroke="none" /></>) },
  { name: "Camtasia Studio", open: true, art: (<><path d="M0 1h22v20H0z" fill="#6f9c34" stroke="none" /><path d="M0 1l22 14V1z" fill="#83ad48" stroke="none" /><path d="M16 6c-6-1-9 1-9 5s3 5 9 5" stroke="#fff" strokeWidth="3" /></>) },
  { name: "Camtasia Recorder", open: true, art: (<><path d="M0 1h22v20H0z" fill="#fff" stroke="none" /><path d="M15 6c-6-1-9 1-9 5s3 5 9 5" stroke="#2e3b22" strokeWidth="3" /><path d="M17 19h5v2h-5z" fill="#6f9c34" stroke="none" /></>) },
  { name: "CorelDRAW", open: true, active: true, art: (<><circle cx="11" cy="11" r="11" fill="#5cb030" stroke="none" /><path d="M1 6c5-1 12 4 14 13L3 12z" fill="#fff" stroke="none" /><path d="M5 3c6 0 11 6 13 13" stroke="#d9f0c8" strokeWidth="1" /></>) },
  { name: "PowerPoint", open: true, art: (<><path d="M1 1h19v19H1z" fill="#fbe3dc" stroke="#d35230" strokeWidth="1" /><path d="M6 17V5h3c4 0 4 6 0 6H6" stroke="#c8431f" strokeWidth="3" /><circle cx="16" cy="14" r="4" fill="#f5b8a4" stroke="#d35230" strokeWidth="1" /></>) },
  {
    name: "Chrome", open: true,
    art: (
      <>
        <circle cx="11" cy="11" r="10" fill="#f6c829" stroke="none" />
        <path d="M2.300 6A10 10 0 0 1 19.700 6L11 11z" fill="#dc4b3c" stroke="none" />
        <path d="M2.300 6A10 10 0 0 0 11 21l4-8-6-1z" fill="#3ba757" stroke="none" />
        <circle cx="11" cy="11" r="5" fill="#4a86e8" stroke="#fff" strokeWidth="1.500" />
      </>
    ),
  },
];

export default function App() {
  return (
    <Desktop>
      <GlobalStyle />
      <AppWindow>
        <TitleBar>
          <CorelLogo />
          <Title>CorelDRAW X8 (64-Bit Evaluation Version) - Untitled-5</Title>
          <WindowButton aria-label="Restore"><Icon w={12} h={12} stroke="#111"><path d="M1 4h7v7H1zM4 4V1h7v7H8" /></Icon></WindowButton>
          <WindowButton aria-label="Close"><Icon w={12} h={12} stroke="#111" sw={1.8}><path d="M1 1l10 10M11 1L1 11" /></Icon></WindowButton>
        </TitleBar>

        <MenuBar>
          {menus.map(([name, u]) => (
            <MenuButton key={name}>
              <span>{u < 0 ? name : (<>{name.slice(0, u)}<u>{name[u]}</u>{name.slice(u + 1)}</>)}</span>
            </MenuButton>
          ))}
        </MenuBar>

        <Toolbar>
          <Tool id="new" label="New" />
          <Tool id="open" label="Open" />
          <Drop label="Open recent" />
          <Tool id="save" label="Save" />
          <Tool id="print" label="Print" />
          <Divider />
          <Tool id="cut" label="Cut" />
          <Tool id="copy" label="Copy" />
          <Tool id="paste" label="Paste" />
          <Divider />
          <Tool id="undo" label="Undo" />
          <Drop label="Undo history" />
          <Tool id="redo" label="Redo" />
          <Drop label="Redo history" color="#cfcfcf" />
          <Divider />
          <Tool id="connect" label="Corel Connect" />
          <Divider />
          <Tool id="import" label="Import" />
          <Tool id="export" label="Export" />
          <ToolButton aria-label="Publish to PDF">
            <PdfIcon>PDF<Icon w={9} h={8} sw={1.2}><path d="M1 2h6v5H1zM4 0v5M2 3l2 2 2-2" /></Icon></PdfIcon>
          </ToolButton>
          <Divider />
          <Combo $w={82}>
            <ComboSelect aria-label="Zoom level" defaultValue="29%"><option>29%</option></ComboSelect>
            <ComboArrow><Arrow /></ComboArrow>
          </Combo>
          <Tool id="full" label="Full-screen preview" />
          <Divider />
          <Tool id="rulers" label="Show rulers" framed />
          <Tool id="grid" label="Show grid" />
          <Tool id="guides" label="Show guidelines" framed />
          <Divider />
          <Divider as="span" aria-hidden="true" hidden />
          <TextButton><span>&nbsp;Snap <u>T</u>o</span></TextButton>
          <Drop label="Snap options" wide />
          <Divider />
          <Tool id="gear" label="Options" />
          <Divider />
          <Tool id="launch" label="Application launcher" />
          <TextButton>Launch</TextButton>
          <Drop label="Launch menu" wide />
        </Toolbar>

        <PropertyBar>
          <ToolButton aria-label="Object origin">
            <Icon w={17} h={17} sw={1.2}>
              <path d="M2.500 2.500h12v12h-12z" strokeDasharray="2 1" />
              {[1, 7, 13].map((x) => [1, 7, 13].map((y) => (
                <rect key={`${x}${y}`} x={x} y={y} width="3" height="3" fill={x === 7 && y === 7 ? "#111" : "#f3f3f3"} />
              )))}
            </Icon>
          </ToolButton>
          <SideLabels $w={15}><label htmlFor="px">X:</label><label htmlFor="py">Y:</label></SideLabels>
          <FieldPair $w={82}>
            <FieldRow><Field id="px" defaultValue="102.958 mm" /></FieldRow>
            <FieldRow><Field id="py" defaultValue="187.436 mm" /></FieldRow>
          </FieldPair>
          <Divider />
          <SideLabels $w={22}>
            <Icon w={13} h={15} sw={1.3}><path d="M1 5v6M12 5v6M1 8h11M5 6v4M8 6v4" /></Icon>
            <Icon w={13} h={15} sw={1.3}><path d="M4 2h6M4 13h6M7 2v11M5 6h4M5 9h4" /></Icon>
          </SideLabels>
          <FieldPair $w={82}>
            <FieldRow><Field aria-label="Width" defaultValue="135.885 mm" /></FieldRow>
            <FieldRow><Field aria-label="Height" defaultValue="121.487 mm" /></FieldRow>
          </FieldPair>
          <SideLabels $w={4} />
          <FieldPair $w={40}>
            <FieldRow><Field aria-label="Horizontal scale" defaultValue="100.0" /></FieldRow>
            <FieldRow><Field aria-label="Vertical scale" defaultValue="100.0" /></FieldRow>
          </FieldPair>
          <SideLabels $w={15}><span>%</span><span>%</span></SideLabels>
          <ToolButton $narrow aria-label="Lock ratio"><Padlock open /></ToolButton>
          <Divider />
          <ToolButton $narrow as="label" htmlFor="angle" aria-label="Rotation">
            <Icon w={16} h={16} stroke="#555" sw={1.3}><path d="M3 10A6 6 0 1 1 8 14M0 7l3 3 3-3" /></Icon>
          </ToolButton>
          <AngleField id="angle" defaultValue="0.0" />
          <ToolButton $narrow as="span"><Icon w={10} h={14} stroke="#555" sw={1.3}><circle cx="5" cy="5" r="4" /></Icon></ToolButton>
          <Divider />
          <ToolButton aria-label="Mirror horizontally">
            <Icon w={16} h={16} sw={1.2}><path d="M1 3v9h5v-3H4V3zM8 0v16" /><path d="M15 3v9h-5v-3h2V3z" fill={teal} /></Icon>
          </ToolButton>
          <ToolButton aria-label="Mirror vertically">
            <Icon w={16} h={16} sw={1.2}><path d="M4 1h8v2H7v3H4zM0 8h16" /><path d="M4 15h8v-2H7v-3H4z" fill={teal} /></Icon>
          </ToolButton>
          <Divider />
          <ToolButton $framed aria-label="Round corner"><Icon w={16} h={16} stroke="#555"><path d="M1 15V8c0-4 3-7 7-7h7v14z" /><path d="M5 5h2v2" strokeWidth="1" /></Icon></ToolButton>
          <ToolButton aria-label="Scalloped corner"><Icon w={16} h={16} stroke="#555"><path d="M1 15V9c4 0 7-3 7-7h7v13z" /><path d="M2 3h2" /></Icon></ToolButton>
          <ToolButton aria-label="Chamfered corner"><Icon w={16} h={16} stroke="#555"><path d="M1 15V8l7-7h7v14z" /><path d="M2 2h2" /></Icon></ToolButton>
          <SideLabels $w={2} />
          <FieldPair $w={75}>
            <FieldRow><Field aria-label="Top left radius" defaultValue="0.0 mm" /><Spin /></FieldRow>
            <FieldRow><Field aria-label="Bottom left radius" defaultValue="0.0 mm" /><Spin /></FieldRow>
          </FieldPair>
          <SideLabels $w={17}>{corner(1, 1)}{corner(1, 11)}</SideLabels>
          <ToolButton $framed aria-label="Edit corners together"><Padlock /></ToolButton>
          <SideLabels $w={17}>{corner(11, 1)}{corner(11, 11)}</SideLabels>
          <FieldPair $w={75}>
            <FieldRow><Field aria-label="Top right radius" defaultValue="0.0 mm" /><Spin /></FieldRow>
            <FieldRow><Field aria-label="Bottom right radius" defaultValue="0.0 mm" /><Spin /></FieldRow>
          </FieldPair>
          <ToolButton $framed aria-label="Relative corner scaling">
            <Icon w={16} h={16}><path d="M1 8c0-4 2-6 6-6M9 14c0-3 1-4 5-4" /><path d="M4 8h2v-2M12 15h2v-2" strokeWidth="1" /></Icon>
          </ToolButton>
          <Divider />
          <ToolButton $narrow aria-label="Outline width">
            <Icon w={12} h={17} sw={1.2}><path d="M6 0L2 7l2 5h4l2-5zM6 1v7M4 12v4h4v-4" /><circle cx="6" cy="8" r="1" fill="#333" /></Icon>
          </ToolButton>
          <Combo $w={75}>
            <ComboBody><SelectedInput aria-label="Outline width value" defaultValue="0.5 pt" /></ComboBody>
            <ComboArrow><Arrow /></ComboArrow>
          </Combo>
          <Divider />
          <ToolButton aria-label="Wrap text">
            <Icon w={18} h={18}><path d="M1 2h14M1 5h8M1 8h7M1 11h7M1 14h14" /><circle cx="12" cy="8" r="3.500" fill="#fff" stroke="#58b9c4" /><path d="M18 14v4h-4z" fill="#000" stroke="none" /></Icon>
          </ToolButton>
        </PropertyBar>

        <Workspace>
          <Toolbox>
            {tools.map((t, i) =>
              t ? (
                <ToolSlot key={t.name} $active={t.active} aria-label={t.name}>
                  <Icon w={16} h={16} stroke="#444">{t.art}</Icon>
                  {t.flyout && <Flyout />}
                </ToolSlot>
              ) : (
                <ToolRule key={i} />
              )
            )}
            <DockButton $h={32} aria-label="Customize toolbox">
              <Icon w={16} h={16} stroke="#c2c2c2" sw={1.3}><circle cx="8" cy="8" r="7" /><path d="M8 3v10M3 8h10" /></Icon>
            </DockButton>
            <DockButton $h={8} aria-label="More tools">
              <Icon w={10} h={8} stroke="#aaa" sw={1.2}><path d="M1 1l3 3-3 3M5 1l3 3-3 3" /></Icon>
            </DockButton>
          </Toolbox>

          <Center>
            <TabStrip>
              <HomeTab aria-label="Welcome screen">
                <Icon w={14} h={14} stroke="none"><path d="M7 0l7 7h-2v6H9V9H5v4H2V7H0z" fill="#2b2b2b" /></Icon>
              </HomeTab>
              <DocTab>Untitled-5</DocTab>
              <AddTab aria-label="New document"><Icon w={10} h={10} stroke="#aaa"><path d="M5 0v10M0 5h10" /></Icon></AddTab>
            </TabStrip>
            <DrawArea>
              <RulerCorner><Icon w={12} h={12} stroke="#888" sw={1}><path d="M3.500 12V0M0 3.500h12" strokeDasharray="2 1" /><path d="M5 5l6 6M7 11.500h4.500V7" /></Icon></RulerCorner>
              <HorizontalRuler />
              <RulerY><VerticalRuler /></RulerY>
              <Canvas><Artwork /></Canvas>
              <PageNavigator />
            </DrawArea>
            <DocumentPalette />
          </Center>

          <Dockers>
            <DockButton $h={18} aria-label="Close docker"><Icon w={8} h={8} stroke="#b0b0b0"><path d="M1 1l6 6M7 1L1 7" /></Icon></DockButton>
            <DockTab $h={126}>
              <Icon w={16} h={16} sw={1}><path d="M5 1l6 5-4 5-6-5z" fill="#555" /><path d="M5 5l3 3" stroke="#e07b2e" strokeWidth="2" /><path d="M12 8v6M15 8v6" /></Icon>
              <span>Object Properties</span>
            </DockTab>
            <DockTab $h={120}>
              <Icon w={16} h={16} sw={1}><path d="M1 2h7M1 7h7M2 1v7M7 1v7M9 11v3M12 9v6M15 9v6" /></Icon>
              <span>Object Manager</span>
            </DockTab>
            <DockTab $h={66}><LensArt /><span>Lens</span></DockTab>
            <DockTab $h={112} $active>
              <Icon w={16} h={16} sw={1.1}><path d="M1 6l2-5 3 5M2 4h3" /><circle cx="12" cy="12" r="2.500" strokeWidth="1.800" stroke="#3a556e" /></Icon>
              <span>Text Properties</span>
            </DockTab>
            <DockButton $h={52} aria-label="Add docker">
              <Icon w={14} h={14} stroke="#bbb" sw={1.2}><circle cx="7" cy="7" r="6" /><path d="M7 3v8M3 7h8" /></Icon>
            </DockButton>
          </Dockers>

          <ColorBar>
            <BarGrip />
            <DockButton $h={18} aria-label="Palette options"><Icon w={4} h={8} stroke="none"><path d="M0 0v8l4-4z" fill="#111" /></Icon></DockButton>
            <DockButton $h={20} aria-label="Eyedropper"><Icon w={12} h={12} stroke="#c4c4c4" sw={2}><path d="M1 11l6-6" /><circle cx="9" cy="3" r="1.500" /></Icon></DockButton>
            <DockButton $h={15} aria-label="Scroll palette up"><Icon w={8} h={6} stroke="#c4c4c4"><path d="M0 5l4-4 4 4" /></Icon></DockButton>
            <CutSwatches $vertical>
              <CrossSwatch />
              {barColors.map((c) => <Swatch key={c} $c={c} aria-label={`Color ${c}`} />)}
            </CutSwatches>
            <DockButton $h={15} aria-label="Scroll palette down"><Icon w={8} h={6} stroke="#999"><path d="M0 1l4 4 4-4" /></Icon></DockButton>
            <DockButton $h={20} aria-label="Expand palette"><Icon w={10} h={8} stroke="#aaa" sw={1.2}><path d="M1 1l3 3-3 3M5 1l3 3-3 3" /></Icon></DockButton>
          </ColorBar>
        </Workspace>

        <StatusBar>
          <StatusCoords>( 556.510, 319.909 )</StatusCoords>
          <StatusCell><Icon w={4} h={8} stroke="none"><path d="M0 0v8l4-4z" fill="#111" /></Icon></StatusCell>
          <StatusObject>Rectangle on Layer 1</StatusObject>
          <StatusCell>
            <Icon w={16} h={16} sw={1.2}><path d="M1 2h14v10H1z" fill="#d2485a" /><path d="M2 7h12v4H2z" fill="#58b9da" stroke="none" /><path d="M5 5h6v3H5z" fill="#fff" stroke="#733" strokeWidth="1" /><path d="M4 14h8" strokeWidth="2" /></Icon>
          </StatusCell>
          <Icon w={18} h={16} sw={1.4}><path d="M7 2l6 6-6 6-6-6z" /><path d="M4 8h6l-3 4z" fill="#c8102e" stroke="none" /><path d="M13 9c4 3 3 6 1 6s-3-2-1-6z" fill="#d8213f" stroke="none" /></Icon>
          <StatusSwatch />
          <StatusFill>C:7 M:1</StatusFill>
          <StatusOutline>0.5 pt</StatusOutline>
        </StatusBar>

        <DockersMenu />
        <Cursor>
          <Icon w={13} h={19} stroke="#333" sw={1}><path d="M1 1v14l3-3 3 6 2-1-2-6h4z" fill="#fff" /></Icon>
        </Cursor>
      </AppWindow>

      <Taskbar>
        <StartButton aria-label="Start">
          <Icon w={16} h={16} stroke="none"><path d="M0 2.500l7-1v6H0zM8 1.300L16 0v7.500H8zM0 8.500h7v6l-7-1zM8 8.500h8V16l-8-1.300z" fill="#fff" /></Icon>
        </StartButton>
        <Search aria-label="Search" placeholder="Search the web and Windows" />
        {taskItems.map((t) => (
          <TaskItem key={t.name} $open={t.open} $active={t.active} aria-label={t.name}>
            <Icon w={22} h={22}>{t.art}</Icon>
          </TaskItem>
        ))}
        <Tray>
          <Icon w={12} h={8} stroke="#ddd"><path d="M1 7l5-5 5 5" /></Icon>
          <Icon w={16} h={14} stroke="#ddd"><path d="M4 5h10v6H4zM2 1v3M0 4h4v2c0 2-2 2-2 2v5" /><path d="M7 7h6v3H7z" fill="#ddd" stroke="none" /></Icon>
          <Icon w={16} h={14} stroke="#ddd" sw={1.2}><path d="M1 5h3l4-4v12L4 9H1zM10 5v4M12 3v8M14 1c2 4 2 8 0 12" /></Icon>
          <span>ENG</span>
        </Tray>
      </Taskbar>
    </Desktop>
  );
}
